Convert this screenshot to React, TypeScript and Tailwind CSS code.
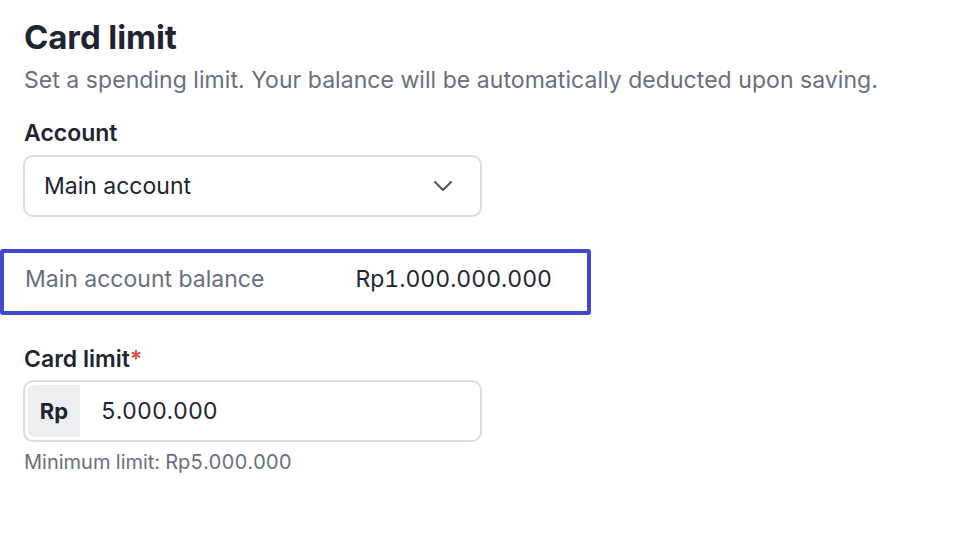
import React from "react";

export default function App() {
  return (
    <div className="w-[953px] h-[535px] bg-white overflow-hidden" style={{ fontFamily: "Inter, 'Noto Sans', sans-serif" }}>
      <div className="pt-[17px]">
        <div className="px-[24px]">
          <h1 className="text-[33px] leading-[40px] font-bold text-[#1f2530] tracking-[-0.1px]">Card limit</h1>
          <p className="mt-[9px] text-[23px] leading-[28px] text-[#677080] tracking-[0.05px]">
            Set a spending limit. Your balance will be automatically deducted upon saving.
          </p>
          <div className="mt-[25px] text-[23px] leading-[28px] font-semibold text-[#1f2530]">Account</div>
          <div className="mt-[8px] -ml-[1px] w-[459px] h-[62px] rounded-[10px] border-2 border-[#d9dde3] flex items-center justify-between pl-[19px] pr-[27px]">
            <span className="text-[23px] text-[#1f2530]">Main account</span>
            <svg width="20" height="12" viewBox="0 0 20 12" fill="none">
              <path d="M2 2 L10 10 L18 2" stroke="#4b5563" strokeWidth="2" strokeLinecap="round" strokeLinejoin="round" />
            </svg>
          </div>
        </div>
        <div className="mt-[32px] w-[591px] h-[66px] border-[4px] border-[#3f48cc] rounded-[3px] flex items-center justify-between pl-[21px] pr-[35px] pb-[5px]">
          <span className="text-[23px] text-[#677080]">Main account balance</span>
          <span className="text-[23px] text-[#1f2530] tabular-nums">Rp1.000.000.000</span>
        </div>
        <div className="px-[24px]">
          <div className="mt-[30px] text-[23px] leading-[28px] font-semibold text-[#1f2530]">
            Card limit<span className="text-[#e5483d]">*</span>
          </div>
          <div className="mt-[7px] -ml-[1px] w-[459px] h-[62px] rounded-[10px] border-2 border-[#d9dde3] flex items-stretch p-[3px]">
            <div className="w-[52px] bg-[#eceff2] rounded-l-[7px] flex items-center justify-center text-[22px] font-bold text-[#1f2530]">Rp</div>
            <div className="flex items-center pl-[21px] text-[23px] text-[#1f2530] tabular-nums">5.000.000</div>
          </div>
          <div className="mt-[8px] text-[20px] leading-[24px] text-[#677080] tabular-nums">Minimum limit: Rp5.000.000</div>
        </div>
      </div>
    </div>
  );
}
